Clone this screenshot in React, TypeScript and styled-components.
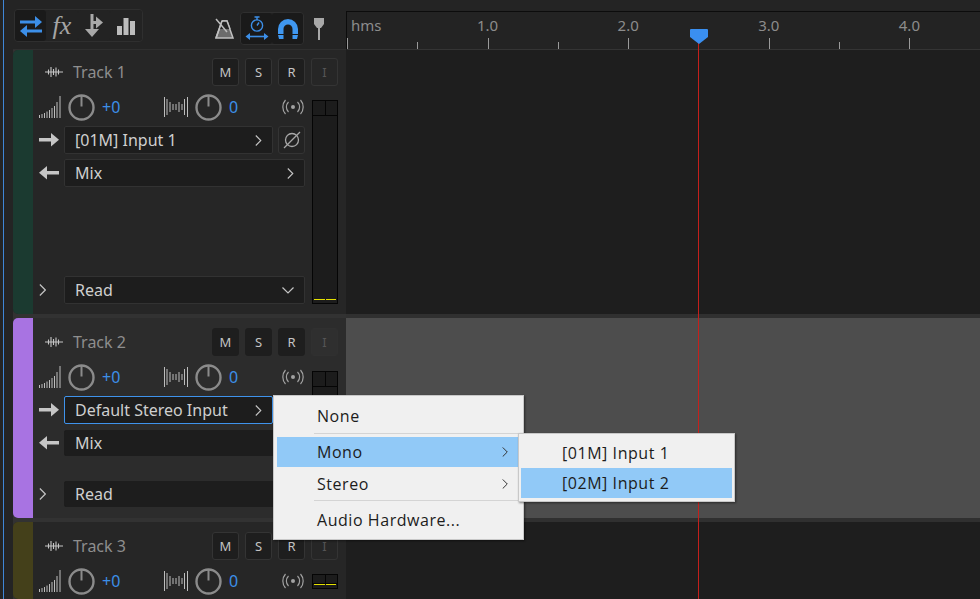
import React from "react";
import styled, { createGlobalStyle } from "styled-components";

const Global = createGlobalStyle`
  html, body { margin: 0; padding: 0; background: #242424; overflow: hidden; }
  * { box-sizing: border-box; }
  #root { height: 100vh; }
`;

const SANS = `"Noto Sans", "Open Sans", sans-serif`;
const BLUE = "#3c8fe8";
const GREY = "#a8a8a8";

const Shell = styled.div`
  position: relative;
  display: flex;
  height: 599px;
  width: 977px;
  margin-left: 3px;
  border-left: 1px solid #3f86d6;
  overflow: hidden;
  font-family: ${SANS};
`;
const LeftColumn = styled.div`
  width: 342px;
  flex: none;
  display: flex;
  flex-direction: column;
  padding-left: 9px;
`;
const Toolbar = styled.div`
  height: 50px;
  flex: none;
  display: flex;
  align-items: flex-start;
  padding: 9px 0 0 1px;
  border-bottom: 1px solid #2f2f2f;
`;
const ToolGroup = styled.div<{ $ml?: number; $mt?: number }>`
  display: flex;
  margin-left: ${(p) => p.$ml ?? 0}px;
  margin-top: ${(p) => p.$mt ?? 0}px;
  border: 1px solid #2f2f2f;
  border-radius: 4px;
`;
const ToolButton = styled.div<{ $active?: boolean; $w?: number }>`
  width: ${(p) => p.$w ?? 32}px;
  height: 31px;
  display: flex;
  align-items: center;
  justify-content: center;
  border-radius: 3px;
  background: ${(p) => (p.$active ? "#1a1a1a" : "#232323")};
`;
const FreeTool = styled.div<{ $ml?: number }>`
  width: 24px;
  height: 34px;
  margin-left: ${(p) => p.$ml ?? 0}px;
  margin-top: 3px;
  display: flex;
  align-items: center;
  justify-content: center;
`;
const FxLabel = styled.span`
  font-family: "Liberation Serif", serif;
  font-style: italic;
  font-size: 26px;
  line-height: 1;
  color: #a5a5a5;
`;
const TrackStack = styled.div`
  flex: 1;
  min-height: 0;
  display: flex;
  flex-direction: column;
  gap: 4px;
  background: #323232;
`;
const TrackPanel = styled.div<{ $h?: number; $sel?: boolean; $top: number }>`
  ${(p) => (p.$h ? `height: ${p.$h}px; flex: none;` : "flex: 1; min-height: 0;")}
  display: flex;
  overflow: hidden;
  border-radius: 5px 0 0 5px;
  padding-top: 0;
  background: ${(p) => (p.$sel ? "#2c2c2c" : "#262626")};
`;
const Strip = styled.div<{ $c: string }>`
  width: 20px;
  flex: none;
  background: ${(p) => p.$c};
`;
const TrackBody = styled.div<{ $top: number }>`
  flex: 1;
  min-width: 0;
  display: flex;
  flex-direction: column;
  padding: ${(p) => p.$top}px 8px 10px 6px;
`;
const TitleRow = styled.div`
  height: 28px;
  flex: none;
  display: flex;
  align-items: center;
  padding-left: 6px;
`;
const TrackName = styled.span`
  margin-left: 10px;
  font-size: 16px;
  color: #8e8e8e;
`;
const BtnGroup = styled.div`
  margin-left: auto;
  display: flex;
  gap: 6px;
`;
const SmallBtn = styled.div<{ $sel?: boolean; $dim?: boolean }>`
  width: 27px;
  height: 28px;
  display: flex;
  align-items: center;
  justify-content: center;
  border-radius: 3px;
  font-size: 13px;
  color: ${(p) => (p.$dim ? "#555555" : "#c4c4c4")};
  background: ${(p) => (p.$dim ? "transparent" : "#1e1e1e")};
  border: 1px solid ${(p) => (p.$sel ? (p.$dim ? "#303030" : "#1e1e1e") : "#343434")};
  ${(p) => p.$dim && p.$sel && "background: #2f2f2f;"}
`;
const Columns = styled.div`
  flex: 1;
  min-height: 0;
  display: flex;
  gap: 7px;
`;
const Controls = styled.div`
  flex: 1;
  min-width: 0;
  margin-top: 6px;
  display: flex;
  flex-direction: column;
`;
const KnobRow = styled.div`
  height: 30px;
  flex: none;
  display: flex;
  align-items: center;
  margin-bottom: 4px;
`;
const KnobGroup = styled.div<{ $w: number }>`
  width: ${(p) => p.$w}px;
  flex: none;
  display: flex;
  align-items: center;
  gap: 7px;
`;
const Value = styled.span`
  font-size: 16px;
  color: ${BLUE};
`;
const ParamRow = styled.div<{ $push?: boolean }>`
  display: flex;
  align-items: center;
  height: 28px;
  margin-bottom: 5px;
  ${(p) => p.$push && "margin-top: auto; margin-bottom: 0;"}
`;
const ArrowSlot = styled.div`
  width: 25px;
  flex: none;
  display: flex;
  align-items: center;
`;
const Field = styled.div<{ $sel?: boolean; $focus?: boolean }>`
  flex: 1;
  min-width: 0;
  height: ${(p) => (p.$sel && !p.$focus ? 26 : 28)}px;
  display: flex;
  align-items: center;
  padding: 0 10px;
  border-radius: 2px;
  font-size: 16px;
  color: #cfcfcf;
  background: #1d1d1d;
  border: 1px solid ${(p) => (p.$focus ? "#3f93ec" : p.$sel ? "#1d1d1d" : "#323232")};
`;
const FieldEnd = styled.span`
  margin-left: auto;
  display: flex;
  align-items: center;
`;
const PhaseBtn = styled.div`
  width: 27px;
  height: 28px;
  margin-left: 5px;
  flex: none;
  display: flex;
  align-items: center;
  justify-content: center;
  border-radius: 3px;
  background: #232323;
  border: 1px solid #343434;
`;
const Meter = styled.div<{ $mt: number }>`
  width: 26px;
  flex: none;
  margin-top: ${(p) => p.$mt}px;
  display: flex;
  flex-direction: column;
  justify-content: space-between;
  background: #1c1c1c;
  border: 1px solid #050505;
`;
const MeterHead = styled.div`
  height: 15px;
  display: grid;
  grid-template-columns: 1fr 1fr;
  border-bottom: 1px solid #050505;
`;
const MeterCell = styled.div`
  & + & { border-left: 1px solid #050505; }
`;
const MeterFoot = styled.div`
  display: flex;
  gap: 1px;
  padding: 0 1px 3px;
`;
const MeterLevel = styled.div`
  flex: 1;
  height: 1.5px;
  background: #e4e000;
`;

const RightColumn = styled.div`
  flex: 1;
  min-width: 0;
  display: flex;
  flex-direction: column;
`;
const TopGap = styled.div`
  height: 11px;
  flex: none;
`;
const Ruler = styled.div`
  height: 39px;
  flex: none;
  display: flex;
  background: #232323;
  border-top: 1px solid #0c0c0c;
  border-left: 1px solid #0c0c0c;
  border-bottom: 1px solid #343434;
`;
const RulerCell = styled.div`
  width: 70.3px;
  flex: none;
  display: flex;
  flex-direction: column;
  justify-content: flex-end;
`;
const RulerLabel = styled.span<{ $center?: boolean }>`
  font-size: 15px;
  line-height: 20px;
  height: 20px;
  margin-bottom: 3px;
  white-space: nowrap;
  color: #8c8c8c;
  align-self: flex-start;
  ${(p) => (p.$center ? "transform: translateX(-50%);" : "margin-left: 4px;")}
`;
const Tick = styled.div<{ $major?: boolean }>`
  width: 1px;
  height: ${(p) => (p.$major ? 11 : 7)}px;
  background: #9a9a9a;
`;
const Lanes = styled.div`
  flex: 1;
  min-height: 0;
  display: flex;
  flex-direction: column;
  gap: 4px;
  background: #303030;
`;
const Lane = styled.div<{ $h?: number; $sel?: boolean }>`
  ${(p) => (p.$h ? `height: ${p.$h}px; flex: none;` : "flex: 1;")}
  background: ${(p) => (p.$sel ? "#4d4d4d" : "#1e1e1e")};
`;
const PlayheadLine = styled.div`
  position: absolute;
  left: 694px;
  top: 42px;
  bottom: 0;
  width: 1px;
  background: #c4201c;
`;
const PlayheadFlag = styled.svg`
  position: absolute;
  left: 686px;
  top: 29px;
`;

const Menu = styled.div`
  position: absolute;
  left: 269px;
  top: 395px;
  width: 251px;
  height: 145px;
  padding: 2px 3px 0;
  background: #f0f0f0;
  border: 1px solid #c8c8c8;
  box-shadow: 1px 1px 2px rgba(0, 0, 0, 0.45);
  font-family: "Open Sans", "Noto Sans", sans-serif;
  font-size: 16px;
  color: #1c1c1c;
`;
const SubMenu = styled(Menu)`
  left: 244px;
  top: 37px;
  width: 217px;
  height: 69px;
  padding: 3px 2px;
  z-index: 2;
`;
const MenuItem = styled.div<{ $h: number; $hi?: boolean; $pad: number }>`
  height: ${(p) => p.$h}px;
  display: flex;
  align-items: center;
  padding: 0 12px 0 ${(p) => p.$pad}px;
  letter-spacing: 0.55px;
  white-space: nowrap;
  background: ${(p) => (p.$hi ? "#91c9f7" : "transparent")};
`;
const MenuSep = styled.div<{ $after: number }>`
  height: 1px;
  margin: 0 0 ${(p) => p.$after}px 37px;
  background: #d4d4d4;
`;

const I = { fill: "none", stroke: GREY, strokeWidth: 2 };

const SwapIcon = () => (
  <svg width="24" height="22" viewBox="0 0 24 22" fill="none" stroke={BLUE} strokeWidth="3">
    <path d="M1 7h17" />
    <path d="M16 1l7 6-7 6z" fill={BLUE} strokeWidth="0" />
    <path d="M23 16H6" />
    <path d="M8 10l-7 6 7 6z" fill={BLUE} strokeWidth="0" />
  </svg>
);
const BranchIcon = () => (
  <svg width="20" height="24" viewBox="0 0 20 24" fill={GREY}>
    <path d="M6.5 0h3v16h-3z" />
    <path d="M1 15h14l-7 8z" />
    <path d="M8 7h5v3H8z" />
    <path d="M12 2.5l7 6-7 6z" />
  </svg>
);
const BarsIcon = () => (
  <svg width="18" height="18" viewBox="0 0 18 18" fill="#bcbcbc">
    <rect x="0" y="9" width="5" height="9" />
    <rect x="6.5" y="1" width="5" height="17" />
    <rect x="13" y="4" width="5" height="14" />
  </svg>
);
const MetronomeIcon = () => (
  <svg width="20" height="22" viewBox="0 0 20 22" fill="none">
    <path d="M7 3h5l6 17H1z" fill="#6c6c6c" stroke="#c0c0c0" strokeWidth="1.5" />
    <path d="M7 3h5l3 8H5z" fill="#242424" />
    <path d="M7 3h5l3 8M7 3L1 20" stroke="#c0c0c0" strokeWidth="1.5" />
    <path d="M1 1l11 13" stroke="#bdbdbd" strokeWidth="1.5" />
  </svg>
);
const StopwatchIcon = () => (
  <svg width="24" height="26" viewBox="0 0 24 26" fill="none" stroke={BLUE} strokeWidth="1.4">
    <circle cx="12" cy="9.5" r="5.6" />
    <path d="M9.5 1h5M12 1v3M12 9.5l2-3" />
    <path d="M3 20.5h18" strokeWidth="1.6" />
    <path d="M5 17l-4.5 3.5L5 24zM19 17l4.5 3.5L19 24z" fill={BLUE} strokeWidth="0" />
  </svg>
);
const MagnetIcon = () => (
  <svg width="20" height="20" viewBox="0 0 20 20">
    <path
      d="M0 10a10 10 0 0 1 20 0v5h-5.5v-5a4.5 4.5 0 0 0-9 0v5H0z"
      fill="#3f97f0"
    />
    <path d="M0 16h5.5v4H1zM14.500 16H20l-1 4h-4.500z" fill="#3f97f0" />
  </svg>
);
const PinIcon = () => (
  <svg width="12" height="24" viewBox="0 0 12 24" fill="#a8a8a8">
    <path d="M1 1h10v6l-3 4H4L1 7z" />
    <rect x="5" y="10" width="2" height="13" />
  </svg>
);
const WaveIcon = () => (
  <svg width="18" height="12" viewBox="0 0 18 12" stroke="#c6c6c6" strokeWidth="1.1">
    <path d="M0 6h18" />
    <path d="M3.500 3.500v5M6 1v10M8.500 3v6M11 1.500v9M13.500 3.500v5" />
  </svg>
);
const VolumeIcon = () => (
  <svg width="22" height="23" viewBox="0 0 22 23" stroke="#bdbdbd" strokeWidth="1">
    <path d="M.5 19v3M3 18v4M5.500 17v5M8 15.500V22M10.500 14v8M13 12v10M15.500 10v12M18 6v16M21 0v22" />
  </svg>
);
const PanIcon = () => (
  <svg width="24" height="23" viewBox="0 0 24 23" stroke="#bdbdbd" strokeWidth="1">
    <path d="M.5 1v20M3 3v16M6 6v10M9 8v6M12 8v6M15 6v10M18 8v6M20.500 3v16M23.500 1v20" />
  </svg>
);
const BroadcastIcon = () => (
  <svg width="22" height="16" viewBox="0 0 22 16" fill="none" stroke="#a2a2a2" strokeWidth="1.2">
    <circle cx="11" cy="8" r="2" fill="#a2a2a2" strokeWidth="0" />
    <path d="M6.500 3a7 7 0 0 0 0 10M15.500 3a7 7 0 0 1 0 10" />
    <path d="M3.500 1a10.500 10.500 0 0 0 0 14M18.500 1a10.500 10.500 0 0 1 0 14" />
  </svg>
);
const Knob = () => (
  <svg width="27" height="27" viewBox="0 0 27 27" fill="none" stroke="#8b8b8b" strokeWidth="2.4">
    <circle cx="13.500" cy="13.500" r="12" />
    <path d="M13.500 1.500v11" strokeWidth="2" />
  </svg>
);
const RightArrow = () => (
  <svg width="20" height="14" viewBox="0 0 20 14" fill="#c6c6c6">
    <path d="M0 5h13v3.500H0z" />
    <path d="M12 0l8 6.750L12 13.500z" />
  </svg>
);
const LeftArrow = () => (
  <svg width="20" height="14" viewBox="0 0 20 14" fill="#c6c6c6">
    <path d="M7 5h13v3.500H7z" />
    <path d="M8 0L0 6.750 8 13.500z" />
  </svg>
);
const Chevron = ({ c = "#c4c4c4", h = 11 }: { c?: string; h?: number }) => (
  <svg width={h * 0.6} height={h} viewBox="0 0 6 11" fill="none" stroke={c} strokeWidth="1.1">
    <path d="M.5.500l5 5-5 5" />
  </svg>
);
const ChevronDown = () => (
  <svg width="12" height="7" viewBox="0 0 12 7" fill="none" stroke="#c4c4c4" strokeWidth="1.2">
    <path d="M.5.500l5.500 5.500 5.500-5.500" />
  </svg>
);
const PhaseIcon = () => (
  <svg width="18" height="18" viewBox="0 0 18 18" fill="none" stroke="#a8a8a8" strokeWidth="1.3">
    <circle cx="9" cy="9" r="6.500" />
    <path d="M1 17L17 1" />
  </svg>
);

interface TrackProps {
  name: string;
  color: string;
  height?: number;
  selected?: boolean;
  top: number;
  meterTop: number;
  input: string;
  focus?: boolean;
  phase?: boolean;
}

const Track = ({ name, color, height, selected, top, meterTop, input, focus, phase }: TrackProps) => (
  <TrackPanel $h={height} $sel={selected} $top={top}>
    <Strip $c={color} />
    <TrackBody $top={top}>
      <TitleRow>
        <WaveIcon />
        <TrackName>{name}</TrackName>
        <BtnGroup>
          <SmallBtn $sel={selected}>M</SmallBtn>
          <SmallBtn $sel={selected}>S</SmallBtn>
          <SmallBtn $sel={selected}>R</SmallBtn>
          <SmallBtn $sel={selected} $dim>I</SmallBtn>
        </BtnGroup>
      </TitleRow>
      <Columns>
        <Controls>
          <KnobRow>
            <KnobGroup $w={125}>
              <VolumeIcon />
              <Knob />
              <Value>+0</Value>
            </KnobGroup>
            <KnobGroup $w={118}>
              <PanIcon />
              <Knob />
              <Value>0</Value>
            </KnobGroup>
            <BroadcastIcon />
          </KnobRow>
          <ParamRow>
            <ArrowSlot><RightArrow /></ArrowSlot>
            <Field $focus={focus} $sel={selected}>
              {input}
              <FieldEnd><Chevron /></FieldEnd>
            </Field>
            {phase && <PhaseBtn><PhaseIcon /></PhaseBtn>}
            {!phase && selected && <PhaseBtn />}
          </ParamRow>
          <ParamRow>
            <ArrowSlot><LeftArrow /></ArrowSlot>
            <Field $sel={selected}>
              Mix
              <FieldEnd><Chevron /></FieldEnd>
            </Field>
          </ParamRow>
          <ParamRow $push>
            <ArrowSlot><Chevron h={12} /></ArrowSlot>
            <Field $sel={selected}>
              Read
              <FieldEnd><ChevronDown /></FieldEnd>
            </Field>
          </ParamRow>
        </Controls>
        <Meter $mt={meterTop}>
          <MeterHead>
            <MeterCell />
            <MeterCell />
          </MeterHead>
          <MeterFoot>
            <MeterLevel />
            <MeterLevel />
          </MeterFoot>
        </Meter>
      </Columns>
    </TrackBody>
  </TrackPanel>
);

const rulerCells = [
  { label: "hms", major: true },
  {},
  { label: "1.0", major: true },
  {},
  { label: "2.0", major: true },
  {},
  { label: "3.0", major: true },
  {},
  { label: "4.0", major: true },
  {},
];

export default function App() {
  return (
    <>
      <Global />
      <Shell>
        <LeftColumn>
          <Toolbar>
            <ToolGroup>
              <ToolButton $active $w={31}><SwapIcon /></ToolButton>
              <ToolButton><FxLabel>fx</FxLabel></ToolButton>
              <ToolButton><BranchIcon /></ToolButton>
              <ToolButton $w={32}><BarsIcon /></ToolButton>
            </ToolGroup>
            <FreeTool $ml={70}><MetronomeIcon /></FreeTool>
            <ToolGroup $ml={3} $mt={3}>
              <ToolButton $active $w={31}><StopwatchIcon /></ToolButton>
              <ToolButton $active $w={31}><MagnetIcon /></ToolButton>
            </ToolGroup>
            <FreeTool $ml={3}><PinIcon /></FreeTool>
          </Toolbar>
          <TrackStack>
            <Track name="Track 1" color="#1b3a30" height={264} top={8} meterTop={14} input="[01M] Input 1" phase />
            <Track name="Track 2" color="#a873e2" height={200} top={10} meterTop={15} input="Default Stereo Input" selected focus />
            <Track name="Track 3" color="#44401a" top={10} meterTop={14} input="[01M] Input 1" phase />
          </TrackStack>
        </LeftColumn>
        <RightColumn>
          <TopGap />
          <Ruler>
            {rulerCells.map((c, i) => (
              <RulerCell key={i}>
                {c.label && <RulerLabel $center={c.label !== "hms"}>{c.label}</RulerLabel>}
                <Tick $major={c.major} />
              </RulerCell>
            ))}
          </Ruler>
          <Lanes>
            <Lane $h={264} />
            <Lane $h={200} $sel />
            <Lane />
          </Lanes>
        </RightColumn>
        <PlayheadLine />
        <PlayheadFlag width="18" height="15" viewBox="0 0 18 15">
          <path d="M0 1a1 1 0 0 1 1-1h16a1 1 0 0 1 1 1v7l-9 7-9-7z" fill="#3a8ff0" />
        </PlayheadFlag>
        <Menu>
          <MenuItem $h={35} $pad={40}>None</MenuItem>
          <MenuSep $after={3} />
          <MenuItem $h={30} $pad={40} $hi>
            Mono
            <FieldEnd><Chevron c="#333333" h={10} /></FieldEnd>
          </MenuItem>
          <MenuItem $h={33} $pad={40}>
            Stereo
            <FieldEnd><Chevron c="#333333" h={10} /></FieldEnd>
          </MenuItem>
          <MenuSep $after={0} />
          <MenuItem $h={38} $pad={40}>Audio Hardware...</MenuItem>
          <SubMenu>
            <MenuItem $h={31} $pad={41}>[01M] Input 1</MenuItem>
            <MenuItem $h={30} $pad={41} $hi>[02M] Input 2</MenuItem>
          </SubMenu>
        </Menu>
      </Shell>
    </>
  );
}
